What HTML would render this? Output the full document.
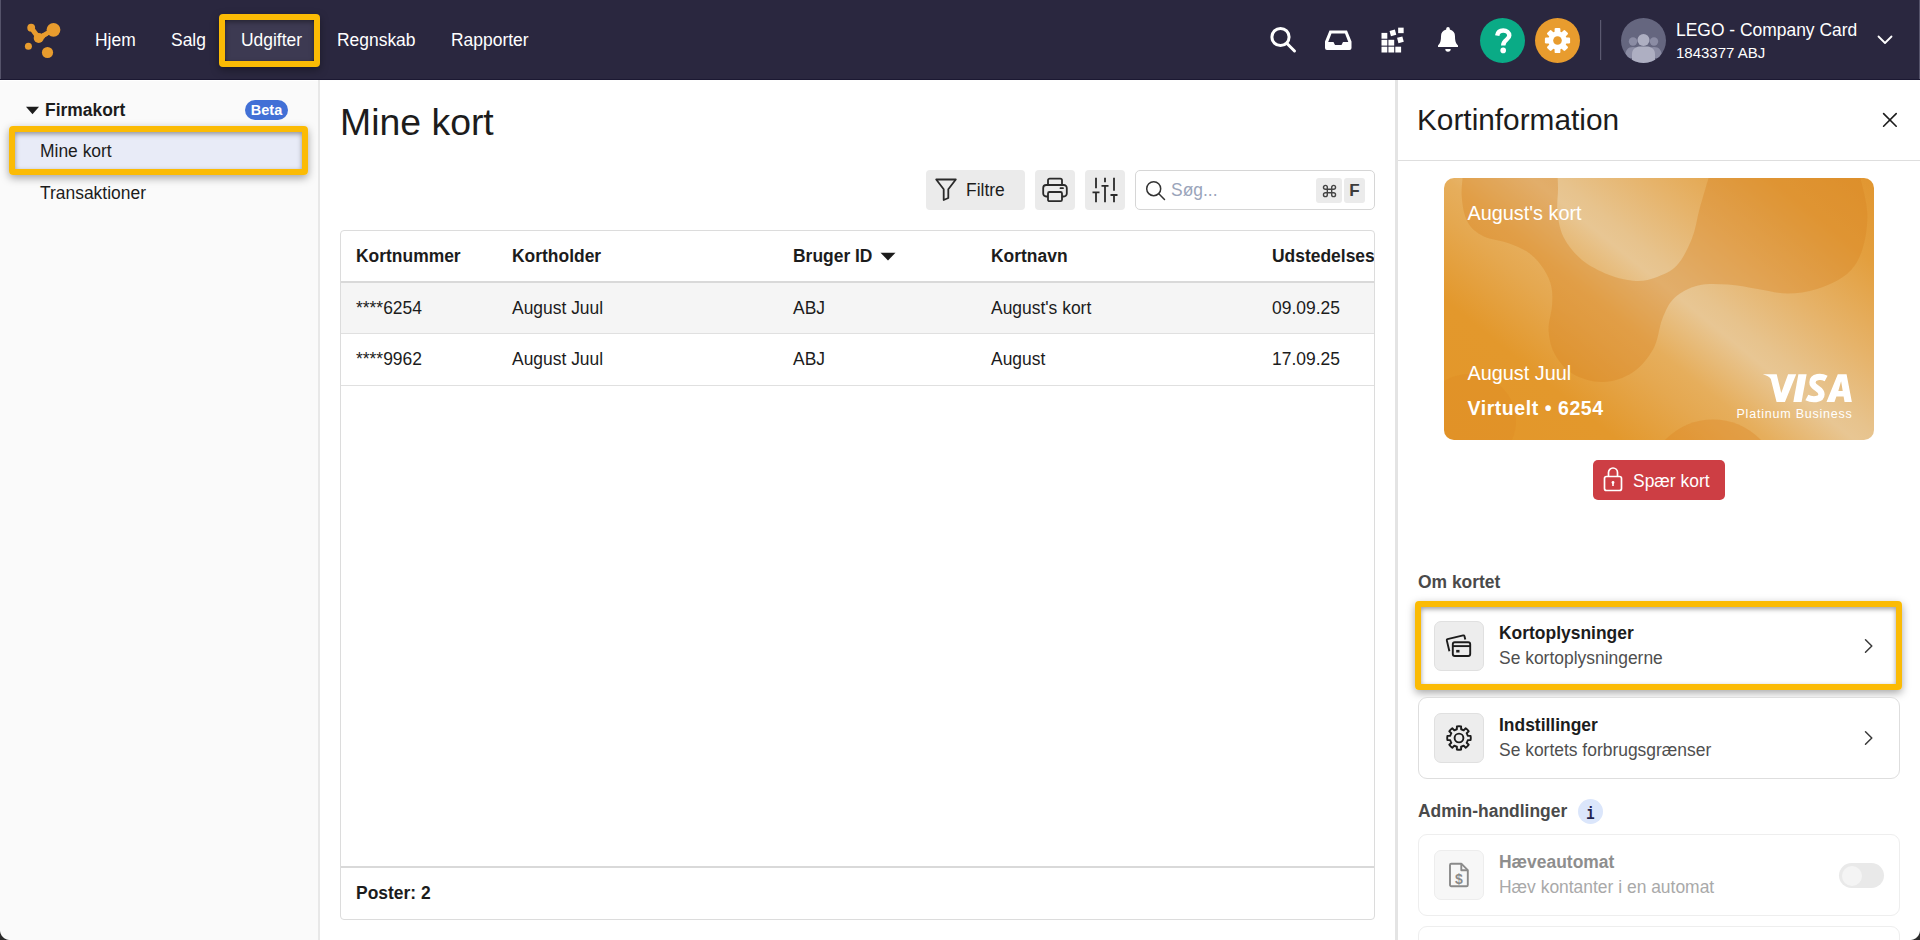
<!DOCTYPE html>
<html><head><meta charset="utf-8">
<style>
*{box-sizing:border-box;margin:0;padding:0}
html,body{width:1920px;height:940px;overflow:hidden;background:#fff;font-family:"Liberation Sans",sans-serif;color:#1c1c1c;font-size:17.45px}
.abs{position:absolute}
svg{position:absolute;overflow:visible}
#nav{position:absolute;left:0;top:0;width:1920px;height:80px;background:#2a273f;border-bottom:1px solid #1b1832}
#nav .it{position:absolute;top:30px;color:#fff;line-height:20px;white-space:nowrap}
#side{position:absolute;left:0;top:80px;width:320px;height:860px;background:#fafafa;border-right:2px solid #e8e8e8}
#main{position:absolute;left:320px;top:80px;width:1076px;height:860px;background:#fff}
#panel{position:absolute;left:1395px;top:80px;width:525px;height:860px;background:#fff;border-left:3px solid #e4e4e4}
.hl{position:absolute;border:6px solid #fbbb05;border-radius:4px;box-shadow:0 3px 8px rgba(0,0,0,.35),inset 0 2px 5px rgba(0,0,0,.38)}
.t{position:absolute;white-space:nowrap;line-height:20px}
.b{font-weight:bold}
.box{width:482px;height:82px;border:1px solid #dedede;border-radius:9px;background:#fff}
.ib{width:50px;height:50px;background:#ededed;border:1px solid #e0e0e0;border-radius:7px}
.btn{position:absolute;background:#ebebeb;border-radius:4px}
</style></head><body>
<!--NAV-->
<div id="nav">
  <svg style="left:0;top:0" width="80" height="80" viewBox="0 0 80 80" fill="#e89c2e">
    <circle cx="53.5" cy="29.8" r="6.9"/><circle cx="31.2" cy="27.7" r="3.9"/><circle cx="38.7" cy="38" r="5"/>
    <circle cx="47.5" cy="52.5" r="5.6"/><circle cx="28.4" cy="46.2" r="3.5"/>
    <path d="M31.200 27.700 L38.700 38" stroke="#e89c2e" stroke-width="5" fill="none"/>
    <path d="M38.700 38 L53.500 29.800" stroke="#e89c2e" stroke-width="4.600" fill="none"/>
    <path d="M33.500 33.500 Q36 34.500 36.300 33.600 L34 32 Z M41.500 33.800 Q44.500 33.500 46.500 31 L48 35.500 Q45 36.500 43.500 39.500 Z"/>
  </svg>
  <div class="it" style="left:95px">Hjem</div>
  <div class="it" style="left:171px">Salg</div>
  <div class="abs" style="left:225px;top:20px;width:89px;height:41px;background:#3d3a52;border-radius:3px"></div>
  <div class="hl" style="left:219px;top:14px;width:101px;height:53px"></div>
  <div class="it" style="left:241px">Udgifter</div>
  <div class="it" style="left:337px">Regnskab</div>
  <div class="it" style="left:451px">Rapporter</div>
  <!--icons-->
  <svg style="left:1260px;top:0" width="360" height="80" viewBox="1260 0 360 80">
    <g fill="none" stroke="#fff" stroke-width="3" stroke-linecap="round"><circle cx="1280.5" cy="37" r="8.6"/><path d="M1287 43.5 L1294.5 51"/></g>
    <path fill="#fff" d="M1329.5 30.5 h17.5 l4.5 11 v6.5 a2 2 0 0 1 -2 2 h-22.5 a2 2 0 0 1 -2 -2 v-6.5 z M1331.500 33.5 l-3.3 8.5 h5.300 l1.500 3 h6.500 l1.500 -3 h5.300 l-3.300 -8.500 z" fill-rule="evenodd"/>
    <g fill="#fff">
      <rect x="1381.5" y="32.9" width="5.8" height="5.8"/>
      <rect x="1381.5" y="39.8" width="5.8" height="5.8"/>
      <rect x="1388.4" y="39.8" width="5.8" height="5.8"/>
      <rect x="1381.5" y="46.7" width="5.8" height="5.8"/>
      <rect x="1388.4" y="46.7" width="5.8" height="5.8"/>
      <rect x="1395.3" y="46.7" width="5.8" height="5.8"/>
      <rect x="1390.15" y="30.15" width="5.500" height="5.500" transform="rotate(-15 1392.9 32.9)"/>
      <rect x="1398.15" y="27.65" width="5.500" height="5.500" transform="rotate(0 1400.9 30.4)"/>
      <rect x="1397.65" y="37.05" width="5.500" height="5.500" transform="rotate(-15 1400.4 39.8)"/>
    </g>
    <path fill="#fff" d="M1448 27 a1.800 1.800 0 0 1 1.800 1.800 v0.600 a7 7 0 0 1 5.200 6.800 c0 5.500 1.200 7.500 3 9.300 v1.500 h-20 v-1.500 c1.800 -1.800 3 -3.800 3 -9.300 a7 7 0 0 1 5.200 -6.800 v-0.600 a1.800 1.800 0 0 1 1.800 -1.800 z M1445.300 49 h5.400 a2.700 2.700 0 0 1 -5.400 0 z"/>
    <circle cx="1502.500" cy="40.500" r="22.500" fill="#0aab86"/>
    <circle cx="1557.500" cy="40.500" r="22.500" fill="#e89c2e"/>
    <rect x="1600" y="20" width="1.200" height="40" fill="#5b5970"/>
  </svg>
  <svg style="left:1480px;top:18px" width="45" height="45" viewBox="1480 18 45 45"><path d="M1497.200 35.600 C1497.800 31.800 1500.300 30.500 1503.200 30.500 C1506.700 30.500 1509.300 32.500 1509.300 35.600 C1509.300 39.800 1503.200 39.600 1503.200 45.400" fill="none" stroke="#fff" stroke-width="4.400"/><circle cx="1503.200" cy="50.400" r="2.800" fill="#fff"/></svg>
  <svg style="left:1535px;top:18px" width="45" height="45" viewBox="-22.5 -22.5 45 45">
    <g fill="#fff"><circle r="9.300"/>
    <g id="tooth"><rect x="-2.900" y="-12.600" width="5.800" height="6" rx="1.200"/></g>
    <use href="#tooth" transform="rotate(45)"/><use href="#tooth" transform="rotate(90)"/><use href="#tooth" transform="rotate(135)"/>
    <use href="#tooth" transform="rotate(180)"/><use href="#tooth" transform="rotate(225)"/><use href="#tooth" transform="rotate(270)"/><use href="#tooth" transform="rotate(315)"/>
    </g><circle r="4.300" fill="#e89c2e"/>
  </svg>
  <!--avatar-->
  <svg style="left:1620.500px;top:18px" width="45" height="45" viewBox="0 0 45 45">
    <defs><clipPath id="avc"><circle cx="22.500" cy="22.500" r="22.500"/></clipPath></defs>
    <circle cx="22.500" cy="22.500" r="22.500" fill="#65667f"/>
    <g clip-path="url(#avc)">
      <g fill="#8b8ca4"><circle cx="12" cy="23.500" r="4.200"/><path d="M4 40 c0 -8 3 -11 8 -11 s8 3 8 11 z"/><circle cx="33" cy="23.500" r="4.200"/><path d="M25 40 c0 -8 3 -11 8 -11 s8 3 8 11 z"/></g>
      <g fill="#aeafc2"><circle cx="22.500" cy="22" r="6"/><path d="M11 45 v-9 c0 -5 4 -7 7 -7.500 h9 c3 .5 7 2.500 7 7.500 v9 z"/></g>
    </g>
  </svg>
  <div class="it" style="left:1676px;top:20px">LEGO - Company Card</div>
  <div class="it" style="left:1676px;top:43px;font-size:15px">1843377 ABJ</div>
  <svg style="left:1876px;top:32px" width="18" height="16" viewBox="0 0 18 16"><path d="M2.500 4.500 L9 11 L15.500 4.500" fill="none" stroke="#fff" stroke-width="1.800" stroke-linecap="round" stroke-linejoin="round"/></svg>
  <div class="abs" style="left:0;top:0;width:1px;height:79px;background:#55536a"></div>
  <div class="abs" style="left:1919px;top:0;width:1px;height:79px;background:#55536a"></div>
</div>
<!--SIDE-->
<div id="side">
  <div class="abs" style="left:0;top:0;width:318px;height:1px;background:#fff"></div>
  <svg style="left:25px;top:26px" width="15" height="9" viewBox="0 0 15 9"><path d="M1 0.700 H14 L7.500 8.200 Z" fill="#1c1c1c"/></svg>
  <div class="t b" style="left:45px;top:20px">Firmakort</div>
  <div class="abs" style="left:245px;top:20px;width:43px;height:20px;border-radius:10px;background:#4270d6;color:#fff;font-weight:bold;font-size:14.500px;line-height:20px;text-align:center">Beta</div>
  <div class="abs" style="left:15px;top:52px;width:287px;height:37px;background:#e8ebf7"></div>
  <div class="hl" style="left:9px;top:46px;width:299px;height:49px"></div>
  <div class="t" style="left:40px;top:61px">Mine kort</div>
  <div class="t" style="left:40px;top:103px">Transaktioner</div>
</div>
<!--MAIN-->
<div id="main">
  <div class="t" style="left:20px;top:20px;font-size:37.400px;line-height:44px">Mine kort</div>

  <div class="btn" style="left:606px;top:90px;width:99px;height:40px"></div>
  <svg style="left:614px;top:97px" width="24" height="26" viewBox="0 0 24 26"><path d="M2.200 2.500 H21.800 L14.300 12.300 V21 L9.700 23 V12.300 Z" fill="none" stroke="#2a2a2a" stroke-width="1.800" stroke-linejoin="round"/></svg>
  <div class="t" style="left:646px;top:100px">Filtre</div>
  <div class="btn" style="left:715px;top:90px;width:40px;height:40px"></div>
  <svg style="left:721px;top:96px" width="28" height="28" viewBox="0 0 28 28" fill="none" stroke="#2a2a2a" stroke-width="1.800" stroke-linejoin="round">
    <path d="M7 9 V4.300 a1.700 1.700 0 0 1 1.700 -1.700 h10.600 a1.700 1.700 0 0 1 1.700 1.700 V9"/>
    <path d="M7 20.500 H5.200 a3 3 0 0 1 -3 -3 v-5.500 a3 3 0 0 1 3 -3 h17.600 a3 3 0 0 1 3 3 v5.500 a3 3 0 0 1 -3 3 H21"/>
    <rect x="7" y="16" width="14" height="9.200" rx="1.500"/>
    <path d="M19.500 12.200 h2.500" stroke-linecap="round"/>
  </svg>
  <div class="btn" style="left:765px;top:90px;width:40px;height:40px"></div>
  <svg style="left:771px;top:96px" width="28" height="28" viewBox="0 0 28 28" fill="none" stroke="#2a2a2a" stroke-width="1.800" stroke-linecap="butt">
    <path d="M5 1.700 V12.300 M5 16.400 V26.300 M1.500 16.400 H8.500 M14 1.700 V6.300 M14 9.800 V26.300 M10.500 9.800 H17.500 M23 1.700 V14.800 M23 19 V26.300 M19.500 19 H26.500"/>
  </svg>
  <div class="abs" style="left:815px;top:90px;width:240px;height:40px;border:1px solid #d6d6d6;border-radius:5px;background:#fff"></div>
  <svg style="left:824px;top:99px" width="24" height="24" viewBox="0 0 24 24" fill="none" stroke="#333" stroke-width="1.500" stroke-linecap="round"><circle cx="9.700" cy="9.700" r="7"/><path d="M14.800 14.800 L20.500 20.500"/></svg>
  <div class="t" style="left:851px;top:100px;color:#9aa4ba">S&oslash;g...</div>
  <div class="abs" style="left:996px;top:98px;width:26px;height:25px;background:#ebebeb;border-radius:3px"></div>
  <svg style="left:1001.500px;top:103.500px" width="15" height="14" viewBox="0 0 17 16" fill="none" stroke="#444" stroke-width="1.600"><path d="M6 6 V3.800 a2.200 2.200 0 1 0 -2.200 2.200 H13.200 a2.200 2.200 0 1 0 -2.200 -2.200 V12.200 a2.200 2.200 0 1 0 2.200 -2.200 H3.800 a2.200 2.200 0 1 0 2.200 2.200 Z"/></svg>
  <div class="abs b" style="left:1024px;top:98px;width:21px;height:25px;background:#ebebeb;border-radius:3px;font-size:17px;line-height:25px;text-align:center;color:#3c3c3c">F</div>


  <div class="abs" style="left:20px;top:150px;width:1035px;height:690px;border:1px solid #dcdcdc;border-radius:4px;overflow:hidden">
    <div class="abs" style="left:0;top:50px;width:1036px;height:2px;background:#d9d9d9"></div>
    <div class="abs" style="left:0;top:52px;width:1036px;height:51px;background:#f5f5f5"></div>
    <div class="abs" style="left:0;top:102px;width:1036px;height:1px;background:#e0e0e0"></div>
    <div class="abs" style="left:0;top:154px;width:1036px;height:1px;background:#e0e0e0"></div>
    <div class="abs" style="left:0;top:635px;width:1036px;height:2px;background:#d9d9d9"></div>
    <div class="t b" style="left:15px;top:15px">Kortnummer</div>
    <div class="t b" style="left:171px;top:15px">Kortholder</div>
    <div class="t b" style="left:452px;top:15px">Bruger ID</div>
    <svg style="left:539px;top:21px" width="16" height="9" viewBox="0 0 16 9"><path d="M0.500 0.700 H15.500 L8 8.500 Z" fill="#1c1c1c"/></svg>
    <div class="t b" style="left:650px;top:15px">Kortnavn</div>
    <div class="t b" style="left:931px;top:15px">Udstedelsesdato</div>
    <div class="t" style="left:15px;top:67px">****6254</div>
    <div class="t" style="left:171px;top:67px">August Juul</div>
    <div class="t" style="left:452px;top:67px">ABJ</div>
    <div class="t" style="left:650px;top:67px">August's kort</div>
    <div class="t" style="left:931px;top:67px">09.09.25</div>
    <div class="t" style="left:15px;top:118px">****9962</div>
    <div class="t" style="left:171px;top:118px">August Juul</div>
    <div class="t" style="left:452px;top:118px">ABJ</div>
    <div class="t" style="left:650px;top:118px">August</div>
    <div class="t" style="left:931px;top:118px">17.09.25</div>
    <div class="t b" style="left:15px;top:652px">Poster: 2</div>
  </div>

</div>
<!--PANEL-->
<div id="panel">
  <div class="t" style="left:19px;top:22px;font-size:29.800px;line-height:36px">Kortinformation</div>

  <svg style="left:483px;top:31px" width="18" height="18" viewBox="0 0 18 18"><path d="M2.600 2.600 L15.200 15.200 M15.200 2.600 L2.600 15.200" stroke="#1c1c1c" stroke-width="1.600" stroke-linecap="round"/></svg>
  <div class="abs" style="left:0;top:80px;width:522px;height:1px;background:#dedede"></div>
<!--CARDSTART-->
  <div class="abs" style="left:46px;top:98px;width:430px;height:262px;border-radius:10px;overflow:hidden;background:linear-gradient(39deg,#e3972a 0%,#e3982c 23%,#e5a850 37%,#e6ae5c 43%,#e8c693 54.5%,#e7c38d 58%,#e6b36a 70%,#e39f3e 86%,#e19630 100%)">
    <svg style="left:0;top:0" width="430" height="262" viewBox="0 0 430 262">
      <path d="M20.0 -12.0 C19.6 -7.0 17.1 8.4 17.7 17.7 C18.3 27.0 19.9 37.0 23.5 43.7 C27.1 50.5 32.4 54.6 39.4 58.2 C46.4 61.8 57.7 62.5 65.4 65.4 C73.1 68.3 79.9 71.2 85.7 75.5 C91.5 79.8 96.4 86.0 100.0 91.5 C103.6 97.0 106.1 102.7 107.4 108.8 C108.7 114.9 108.5 120.7 108.0 128.0 C107.5 135.3 104.1 144.7 104.6 152.8 C105.1 160.9 106.9 169.4 111.0 176.6 C115.1 183.8 121.0 191.4 129.0 196.0 C137.0 200.6 148.9 204.2 158.8 204.0 C168.7 203.8 180.2 200.1 188.6 194.5 C197.0 188.9 204.4 179.6 209.4 170.7 C214.4 161.8 214.8 149.3 218.3 140.9 C221.8 132.5 224.4 125.6 230.3 120.0 C236.2 114.4 245.1 109.7 254.0 107.5 C262.9 105.3 273.9 106.0 283.9 106.6 C293.8 107.2 303.8 109.5 313.7 111.0 C323.6 112.5 333.6 115.6 343.5 115.6 C353.4 115.6 363.1 114.3 373.0 111.0 C382.9 107.7 395.5 102.4 403.0 96.0 C410.5 89.6 414.6 82.3 418.0 72.4 C421.4 62.5 423.6 48.7 423.3 36.6 C423.0 24.5 418.3 8.1 416.4 0.0 C414.5 -8.1 412.7 -10.0 412.0 -12.0 L267.0 -12.0 C266.6 -10.0 266.4 -7.1 264.5 0.0 C262.6 7.1 258.4 20.6 255.6 30.7 C252.8 40.8 251.8 51.1 248.0 60.5 C244.2 69.9 238.9 80.8 233.0 87.3 C227.1 93.8 219.2 96.6 212.4 99.2 C205.6 101.8 199.9 103.4 192.0 103.0 C184.1 102.6 173.7 100.3 164.7 96.8 C155.7 93.3 145.4 88.1 138.0 82.0 C130.6 75.9 124.1 67.8 120.0 60.0 C115.9 52.2 114.5 43.3 113.5 35.0 C112.5 26.7 114.1 17.8 114.0 10.0 C113.9 2.2 113.2 -8.3 113.0 -12.0 Z" fill="rgba(216,128,32,0.35)"/>
      <circle cx="25" cy="243" r="47" fill="rgba(217,125,25,0.16)"/>
      <circle cx="269" cy="308" r="66.500" fill="rgba(217,125,25,0.30)"/>
    </svg>
    <div class="t" style="left:23.500px;top:23px;color:#fff;font-size:19.850px;line-height:24px">August's kort</div>
    <div class="t" style="left:23.500px;top:183px;color:#fff;font-size:19.850px;line-height:24px">August Juul</div>
    <div class="t b" style="left:23.500px;top:218px;color:#fff;font-size:19.500px;line-height:24px;letter-spacing:0.550px">Virtuelt &bull; 6254</div>
    <svg style="left:0;top:0" width="430" height="262" viewBox="0 0 430 262"><g transform="translate(286,187) scale(0.0677)" fill="#fff">
      <path d="M485 135 L690 135 L757 415 L858 135 L978 135 L812 548 L688 548 L603 205 Q575 160 485 135 Z"/>
      <path d="M1010 135 L1132 135 L1057 548 L935 548 Z"/>
      <path d="M1420 200 C1345 160 1222 165 1218 255 C1214 340 1352 340 1352 432 C1352 522 1205 518 1135 480" fill="none" stroke="#fff" stroke-width="92"/>
      <path fill-rule="evenodd" d="M1425 548 L1592 135 L1722 135 L1800 548 L1692 548 L1678 465 L1572 465 L1543 548 Z M1600 385 L1665 385 L1641 240 Z"/>
    </g></svg>
    <div class="t" style="left:292.500px;top:227.500px;color:#fff;font-size:12.500px;line-height:16px;letter-spacing:0.780px">Platinum Business</div>
  </div>
<!--CARDEND-->
  <div class="abs" style="left:195px;top:380px;width:132px;height:40px;background:#cd3e44;border-radius:5px"></div>
  <svg style="left:204px;top:386px" width="22" height="27" viewBox="0 0 22 27" fill="none" stroke="#fff" stroke-width="1.700" stroke-linejoin="round">
    <rect x="2.500" y="10.500" width="17" height="14" rx="2"/><path d="M6.500 10.500 V6.500 a4.500 4.500 0 0 1 9 0 V10.500"/>
    <circle cx="11" cy="16.500" r="1.400" fill="#fff" stroke="none"/><path d="M11 17 V20" stroke-width="1.600"/>
  </svg>
  <div class="t" style="left:235px;top:391px;color:#fff">Sp&aelig;r kort</div>
  <div class="t b" style="left:20px;top:492px;color:#4a4a4a">Om kortet</div>

  <div class="abs" style="left:23px;top:527px;width:475px;height:77px;background:#fff"></div>
  <div class="hl" style="left:17px;top:521px;width:487px;height:89px"></div>
  <div class="abs ib" style="left:36px;top:541px"></div>
  <svg style="left:46px;top:551px" width="30" height="30" viewBox="0 0 30 30" fill="none" stroke="#1c1c1c" stroke-width="1.900" stroke-linejoin="round" stroke-linecap="butt">
    <rect x="8.800" y="11.300" width="17.400" height="13.700" rx="2"/><path d="M8.800 15.100 H26.200"/><rect x="12.200" y="18.900" width="3.300" height="2.600" fill="#1c1c1c" stroke="none"/>
    <path d="M5.400 20.200 L2.800 9.400 a1 1 0 0 1 .7 -1.200 L19.200 4.400 a1 1 0 0 1 1.200 .7 L21.300 8.600"/>
  </svg>
  <div class="t b" style="left:101px;top:543px">Kortoplysninger</div>
  <div class="t" style="left:101px;top:568px;color:#4f4f4f">Se kortoplysningerne</div>
  <svg style="left:464px;top:556px" width="14" height="20" viewBox="0 0 14 20"><path d="M3.500 3.700 L9.800 10 L3.500 16.300" fill="none" stroke="#3a3a3a" stroke-width="1.500" stroke-linecap="round" stroke-linejoin="round"/></svg>

  <div class="abs box" style="left:20px;top:617px"></div>
  <div class="abs ib" style="left:36px;top:633px"></div>
  <svg style="left:47px;top:644px" width="28" height="28" viewBox="-14 -14 28 28" fill="none" stroke="#1c1c1c" stroke-width="1.900" stroke-linejoin="round">
    <circle r="4.400"/>
    <path d="M-2.10 -8.75 L-2.12 -11.61 A11.8 11.8 0 0 1 2.12 -11.61 L2.10 -8.75 A9.0 9.0 0 0 1 4.70 -7.67 L6.71 -9.71 A11.8 11.8 0 0 1 9.71 -6.71 L7.67 -4.70 A9.0 9.0 0 0 1 8.75 -2.10 L11.61 -2.12 A11.8 11.8 0 0 1 11.61 2.12 L8.75 2.10 A9.0 9.0 0 0 1 7.67 4.70 L9.71 6.71 A11.8 11.8 0 0 1 6.71 9.71 L4.70 7.67 A9.0 9.0 0 0 1 2.10 8.75 L2.12 11.61 A11.8 11.8 0 0 1 -2.12 11.61 L-2.10 8.75 A9.0 9.0 0 0 1 -4.70 7.67 L-6.71 9.71 A11.8 11.8 0 0 1 -9.71 6.71 L-7.67 4.70 A9.0 9.0 0 0 1 -8.75 2.10 L-11.61 2.12 A11.8 11.8 0 0 1 -11.61 -2.12 L-8.75 -2.10 A9.0 9.0 0 0 1 -7.67 -4.70 L-9.71 -6.71 A11.8 11.8 0 0 1 -6.71 -9.71 L-4.70 -7.67 A9.0 9.0 0 0 1 -2.10 -8.75 Z"/>
  </svg>
  <div class="t b" style="left:101px;top:635px">Indstillinger</div>
  <div class="t" style="left:101px;top:660px;color:#4f4f4f">Se kortets forbrugsgr&aelig;nser</div>
  <svg style="left:464px;top:648px" width="14" height="20" viewBox="0 0 14 20"><path d="M3.500 3.700 L9.800 10 L3.500 16.300" fill="none" stroke="#3a3a3a" stroke-width="1.500" stroke-linecap="round" stroke-linejoin="round"/></svg>

  <div class="t b" style="left:20px;top:721px;color:#4a4a4a">Admin-handlinger</div>
  <div class="abs" style="left:180px;top:719px;width:25px;height:25px;border-radius:50%;background:#dbe6fb"></div>
  <div class="abs b" style="left:180px;top:721.500px;width:25px;height:25px;font-family:'Liberation Mono',monospace;font-size:18px;line-height:24px;text-align:center;color:#1f2350;transform:scaleX(.78)">i</div>

  <div class="abs box" style="left:20px;top:754px;border-color:#eeeeee"></div>
  <div class="abs ib" style="left:36px;top:770px;background:#f7f7f7;border-color:#ededed"></div>
  <svg style="left:48px;top:780px" width="26" height="30" viewBox="0 0 26 30" fill="none" stroke="#8a8a8a" stroke-width="1.900" stroke-linejoin="round">
    <path d="M5.300 3.700 H15.300 L21.800 10.200 V25 a1.300 1.300 0 0 1 -1.300 1.300 H5.300 a1.300 1.300 0 0 1 -1.300 -1.300 V5 a1.300 1.300 0 0 1 1.300 -1.300 Z"/><path d="M15.300 3.700 V10.200 H21.800"/>
  </svg>
  <div class="abs b" style="left:48px;top:791px;width:26px;font-size:14px;line-height:16px;text-align:center;color:#8a8a8a">$</div>
  <div class="t b" style="left:101px;top:772px;color:#8e8e8e">H&aelig;veautomat</div>
  <div class="t" style="left:101px;top:797px;color:#a9a9a9">H&aelig;v kontanter i en automat</div>
  <div class="abs" style="left:441px;top:783px;width:45px;height:25px;border-radius:13px;background:#e9e9e9"></div>
  <div class="abs" style="left:443.500px;top:785.500px;width:20px;height:20px;border-radius:50%;background:#f4f4f4"></div>

  <div class="abs box" style="left:20px;top:846px;border-color:#eeeeee"></div>

</div>
<div class="abs" style="left:0;top:930px;width:10px;height:10px;background:radial-gradient(circle at 10px 0,rgba(0,0,0,0) 9.500px,#2b2b2b 10.500px)"></div>
<div class="abs" style="left:1910px;top:930px;width:10px;height:10px;background:radial-gradient(circle at 0 0,rgba(0,0,0,0) 9.500px,#2b2b2b 10.500px)"></div>
</body></html>
